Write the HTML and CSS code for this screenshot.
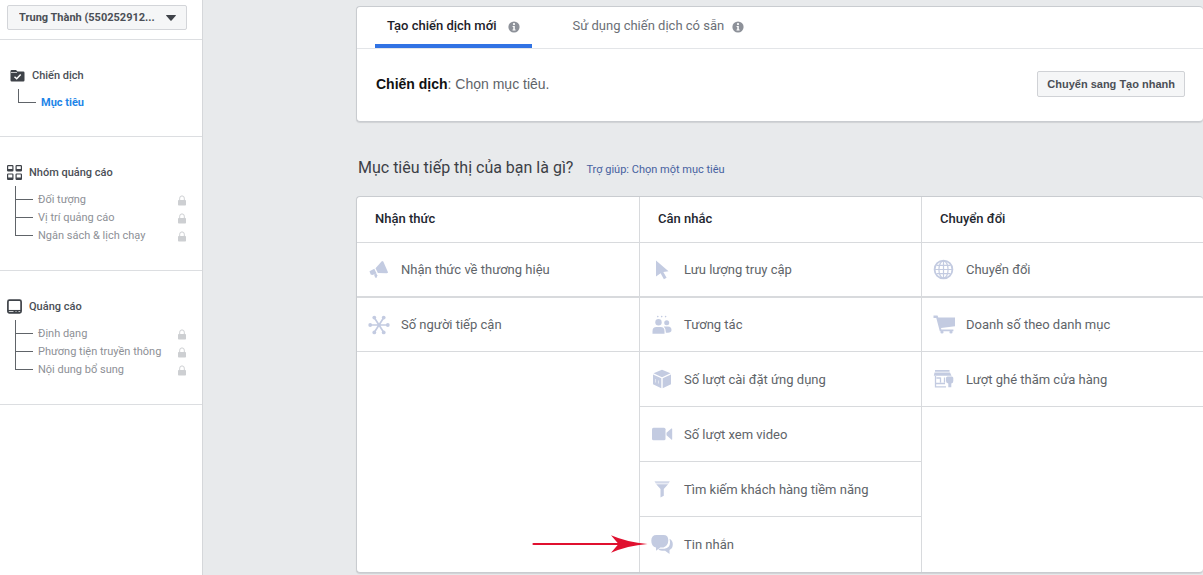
FILE: index.html
```html
<!DOCTYPE html>
<html lang="vi">
<head>
<meta charset="utf-8">
<meta name="viewport" content="width=device-width, initial-scale=1">
<title>Tạo chiến dịch mới</title>
<link rel="stylesheet" href="styles.css">
</head>
<body>
<svg class="defs" aria-hidden="true">
  <symbol id="lock" viewBox="0 0 8 11"><path d="M1.700 5V3.200a2.300 2.300 0 0 1 4.600 0V5" fill="none" stroke="currentColor" stroke-width="1"/><rect y="5" width="8" height="5.500" rx=".8" fill="currentColor"/></symbol>
  <symbol id="info" viewBox="0 0 12 12"><circle cx="6" cy="6" r="5.600" fill="#8d9199"/><circle cx="6" cy="3.100" r="1.100" fill="#fff"/><path d="M4.600 5h2.200v3.400h.8v1H4.500v-1h.8V6h-.7z" fill="#fff"/></symbol>
</svg>
<div class="app">
  <aside class="sidebar">
    <div class="account">
      <select class="account-select" aria-label="Tài khoản"><option>Trung Thành (550252912...</option></select>
      <svg class="account-caret" viewBox="0 0 10 6"><path d="M.5 0h9q.7 0 .2.7L5.600 5.500q-.6.6-1.200 0L.3.7Q-.2 0 .5 0z" fill="#3f4349"/></svg>
    </div>
    <nav aria-label="Các bước">
      <section class="step step-campaign">
        <h2 class="step-title"><svg class="step-icon" viewBox="0 0 15 15"><path d="M.5 3.200q0-1.200 1.200-1.200H6l1.500 1.500h5.800q1.200 0 1.200 1.200v7.600q0 1.200-1.200 1.200H1.700Q.5 13.500.5 12.300z" fill="#3f4349"/><path d="M1 4.500h6" stroke="#fff" stroke-width=".7"/><path d="M4.500 8.800l2.200 2 4-4.300" fill="none" stroke="#fff" stroke-width="1.500"/></svg>Chiến dịch</h2>
        <ul class="tree"><li class="tree-item"><a class="tree-link current" href="#muc-tieu">Mục tiêu</a></li></ul>
      </section>
      <section class="step">
        <h2 class="step-title"><svg class="step-icon" viewBox="0 0 15 15" fill="none" stroke="#3f4349" stroke-width="1.200"><rect x=".6" y=".6" width="5.300" height="5.300" rx=".6"/><rect x="9.100" y=".6" width="5.300" height="5.300" rx=".6"/><rect x=".6" y="9" width="5.300" height="5.300" rx=".6"/><rect x="9.100" y="9" width="5.300" height="5.300" rx=".6"/><path d="M.6 5h5.300M9.100 5h5.300M.6 13.400h5.300M9.100 13.400h5.300" stroke-width="2"/></svg>Nhóm quảng cáo</h2>
        <ul class="tree">
          <li class="tree-item"><a class="tree-link" href="#doi-tuong">Đối tượng</a><svg class="lock"><use href="#lock"/></svg></li>
          <li class="tree-item"><a class="tree-link" href="#vi-tri">Vị trí quảng cáo</a><svg class="lock"><use href="#lock"/></svg></li>
          <li class="tree-item"><a class="tree-link" href="#ngan-sach">Ngân sách &amp; lịch chạy</a><svg class="lock"><use href="#lock"/></svg></li>
        </ul>
      </section>
      <section class="step">
        <h2 class="step-title"><svg class="step-icon" viewBox="0 0 15 15" fill="none" stroke="#3f4349"><rect x=".9" y="1.200" width="13.200" height="12.600" rx="1.500" stroke-width="1.700"/><path d="M1 11.600h13" stroke-width="1.300"/><path d="M6.500 12.800h6" stroke-width="1.500" stroke-dasharray="2 1"/></svg>Quảng cáo</h2>
        <ul class="tree">
          <li class="tree-item"><a class="tree-link" href="#dinh-dang">Định dạng</a><svg class="lock"><use href="#lock"/></svg></li>
          <li class="tree-item"><a class="tree-link" href="#phuong-tien">Phương tiện truyền thông</a><svg class="lock"><use href="#lock"/></svg></li>
          <li class="tree-item"><a class="tree-link" href="#noi-dung">Nội dung bổ sung</a><svg class="lock"><use href="#lock"/></svg></li>
        </ul>
      </section>
    </nav>
  </aside>
  <main class="main">
    <section class="card">
      <div class="tabs" role="tablist">
        <button class="tab active" role="tab" aria-selected="true">Tạo chiến dịch mới<svg class="info"><use href="#info"/></svg></button>
        <button class="tab" role="tab" aria-selected="false">Sử dụng chiến dịch có sẵn<svg class="info"><use href="#info"/></svg></button>
      </div>
      <div class="summary">
        <p class="summary-text"><strong>Chiến dịch</strong>: Chọn mục tiêu.</p>
        <button class="quick">Chuyển sang Tạo nhanh</button>
      </div>
    </section>
    <header class="question">
      <h1 class="question-title">Mục tiêu tiếp thị của bạn là gì?</h1>
      <a class="help" href="#tro-giup">Trợ giúp: Chọn một mục tiêu</a>
    </header>
    <section class="card objectives">
      <div class="column">
        <h3 class="column-title">Nhận thức</h3>
        <button class="objective"><svg class="icon" viewBox="0 0 22 22"><path d="M14 2l1.300.4 4.800 11.100-1.200.8-9-.3-2.400-4.800z"/><path d="M1.500 12.200l4.800-2.500 2.300 4.700-4.300 1.700-1.600-.6z"/><path d="M6 15.600l2.400-.8 1 1.800-1 2.400-1.300-.5z"/></svg>Nhận thức về thương hiệu</button>
        <button class="objective"><svg class="icon" viewBox="0 0 22 22"><path d="M3 11h16M6.500 4l9 14M15.500 4l-9 14" stroke="currentColor" stroke-width="1.700"/><circle cx="2.200" cy="11" r="1.900"/><circle cx="19.800" cy="11" r="1.900"/><circle cx="6.300" cy="3.600" r="1.900"/><circle cx="15.700" cy="3.600" r="1.900"/><circle cx="6.300" cy="18.400" r="1.900"/><circle cx="15.700" cy="18.400" r="1.900"/></svg>Số người tiếp cận</button>
      </div>
      <div class="column">
        <h3 class="column-title">Cân nhắc</h3>
        <button class="objective"><svg class="icon" viewBox="0 0 22 22"><path d="M5 1.500l12.500 10.800-5.200.6 3.300 5.900-2.700 1.500-3.300-6L5 17.500z"/></svg>Lưu lượng truy cập</button>
        <button class="objective"><svg class="icon" viewBox="0 0 22 22"><circle cx="7.500" cy="8.300" r="3.200"/><circle cx="15.700" cy="8.800" r="2.500"/><path d="M1.500 19.800v-2.600q0-4.200 4-4.200h4q4 0 4 4.200v2.600zM12.800 12.400h4.200q3.500 0 3.500 3.500 0 2.600-3.700 2.800h-1.900q.2-4-2.100-6.300z"/><circle cx="6.800" cy="2.600" r=".8"/><circle cx="10.700" cy="2.600" r=".8"/><circle cx="14.600" cy="2.600" r=".8"/></svg>Tương tác</button>
        <button class="objective"><svg class="icon" viewBox="0 0 22 22"><path d="M11 1.800l8.500 3.500-8.500 3.900-8.500-3.900z"/><path d="M2 6.500l8.300 3.800v10L2 16.300zM20 6.500l-8.300 3.800v10l8.300-4z"/><path d="M4.500 11v3.500M7.500 12.500v3" stroke="#fff" stroke-width=".5"/></svg>Số lượt cài đặt ứng dụng</button>
        <button class="objective"><svg class="icon" viewBox="0 0 22 22"><rect x="1" y="4.800" width="13.500" height="12.500" rx="1.500"/><path d="M15.500 9.800l4.800-4.200q.9-.6.900.4v10q0 1-.9.400l-4.800-4.200z"/></svg>Số lượt xem video</button>
        <button class="objective"><svg class="icon" viewBox="0 0 22 22"><path d="M3.500 3.200h15.300l-1.300 2.200H4.800z" opacity=".75"/><path d="M5.200 6.200h11.900L12.800 11v6.800L9.500 19.500V11z"/></svg>Tìm kiếm khách hàng tiềm năng</button>
        <button class="objective"><svg class="icon" viewBox="0 0 22 22"><path d="M5.500 1h7q4.800 0 4.800 5.200t-4.800 7.300H9.300L5 16.800v-3.300Q.3 12.500.3 6.800.3 1 5.500 1z"/><path d="M18.500 4.800q3.300 1.600 3.300 5.700 0 4-3.300 5.500v4l-4.400-3.200H11q-2.700 0-4-2h6.500q5.500-.8 5.500-6.300 0-1.700-.5-3.700z"/></svg>Tin nhắn
          <svg class="pointer" viewBox="0 0 116 20" aria-hidden="true"><path d="M1.500 10H90" stroke="#e0102f" stroke-width="2.200" stroke-linecap="round"/><path d="M79 1.200Q95 8.200 115.500 10 95 11.800 79 18.800L86.500 10z" fill="#e0102f"/></svg>
        </button>
      </div>
      <div class="column">
        <h3 class="column-title">Chuyển đổi</h3>
        <button class="objective"><svg class="icon" viewBox="0 0 22 22"><g fill="none" stroke="currentColor" stroke-width="1.200"><circle cx="10.500" cy="10.500" r="8.900" stroke-width="1.800"/><ellipse cx="10.500" cy="10.500" rx="4.600" ry="8.700"/><path d="M10.500 2v17M2 10.500h17M3.500 6.300h14M3.500 14.700h14"/></g></svg>Chuyển đổi</button>
        <button class="objective"><svg class="icon" viewBox="0 0 22 22"><path d="M.5 1.500h4l.8 2H22v8.800L8 14l.4 1.500h12v1.700H6.800L3.300 4H.5z"/><circle cx="9" cy="18" r="1.600"/><circle cx="18" cy="18" r="1.600"/></svg>Doanh số theo danh mục</button>
        <button class="objective"><svg class="icon" viewBox="0 0 22 22"><path d="M2 2h14.500v1.800H2zM1.500 4.600H17l1.500 3.200H.8z"/><path d="M2.500 8v10.800H13M2.500 15.500H12M7.500 9.500v5M3.500 10h4M11.500 9.500v5" fill="none" stroke="currentColor" stroke-width="1.300"/><path d="M13 10q0-1.500 1.500-1.500h4.300q1.500 0 1.500 1.500v3q0 2-2 2.500v3.800h-3v-3.800q-2.300-.5-2.300-2.500z"/></svg>Lượt ghé thăm cửa hàng</button>
      </div>
    </section>
  </main>
</div>
</body>
</html>
```
FILE: styles.css
```css
* { box-sizing: border-box; }
body { margin: 0; background: #e8eaec; font-family: Roboto, "Liberation Sans", sans-serif; color: #4b4f56; }
h1, h2, h3, p, ul { margin: 0; padding: 0; }
button, select { font: inherit; color: inherit; }
button { cursor: pointer; }
a { text-decoration: none; }
.defs { display: none; }
.app { display: flex; min-height: 100vh; }

.sidebar { flex: 0 0 203px; background: #fff; border-right: 1px solid #d5d7da; }
.account { position: relative; height: 40px; padding: 5px 15px 0 7px; border-bottom: 1px solid #dcdee1; }
.account-select { display: block; width: 100%; height: 25px; padding: 0 24px 0 11px; border: 1px solid #d3d5d9; border-radius: 2px; background: #f5f6f7; appearance: none; font-size: 11px; font-weight: 700; }
.account-caret { position: absolute; top: 15px; right: 26px; width: 10px; height: 6px; pointer-events: none; }

.step { padding: 25px 16px 26px 7px; border-bottom: 1px solid #dcdee1; }
.step-campaign { padding-bottom: 25px; padding-left: 10px; }
.step-title { display: flex; align-items: center; gap: 7px; height: 20px; font-size: 11px; font-weight: 500; }
.step-icon { width: 15px; height: 15px; }
.tree { position: relative; margin: 8px 0 0 8px; list-style: none; }
.tree::before { content: ""; position: absolute; left: 0; top: -4px; bottom: 8px; border-left: 1px solid #606469; }
.tree-item { display: flex; align-items: center; height: 18px; font-size: 11px; }
.tree-item::before { content: ""; flex: none; width: 18px; margin-right: 5px; border-top: 1px solid #606469; }
.tree-link { flex: 1; color: #8d9096; white-space: nowrap; }
.tree-link.current { color: #1d85e8; font-weight: 700; }
.lock { width: 8px; height: 11px; margin-top: 3px; color: #cdcfd2; }

.main { flex: 1; min-width: 0; padding: 6px 0 2px 153px; }
.card { background: #fff; border: solid #c9ccd0; border-width: 1px 0 1px 1px; border-radius: 4px; box-shadow: 0 1px 1px #d0d2d5; }
.tabs { display: flex; gap: 28px; height: 42px; padding-left: 18px; border-bottom: 1px solid #e3e5e8; }
.tab { display: flex; align-items: center; gap: 8px; padding: 0 12px; border: 0; border-bottom: 4px solid transparent; background: none; font-size: 13px; color: #6b6f76; }
.tab.active { gap: 12px; border-bottom-color: #3173e4; font-weight: 500; color: #1d2129; }
.info { width: 12px; height: 12px; margin-top: 2px; }
.summary { display: flex; align-items: center; justify-content: space-between; height: 70px; padding: 0 18px 0 19px; margin-bottom: 2px; }
.summary-text { font-family: "Liberation Sans", sans-serif; font-size: 14px; color: #606469; }
.summary-text strong { color: #111; }
.quick { height: 26px; padding: 0 9px; border: 1px solid #d0d2d6; border-radius: 2px; background: #f5f6f7; font-family: "Liberation Sans", sans-serif; font-size: 11px; font-weight: 700; }

.question { display: flex; align-items: baseline; gap: 13px; height: 74px; padding: 34px 0 0 2px; }
.question-title { font-size: 16px; line-height: 24px; font-weight: 400; color: #3c4046; }
.help { font-size: 11px; color: #4661a0; }

.objectives { display: grid; grid-template-columns: repeat(3, 1fr); }
.column + .column { border-left: 1px solid #d8dadd; }
.column-title { height: 46px; padding-left: 18px; border-bottom: 1px solid #d8dadd; font-size: 13px; line-height: 43px; font-weight: 500; color: #23272f; }
.objective { position: relative; display: flex; align-items: center; gap: 11px; width: 100%; height: 55px; padding: 0 11px; border: solid #d8dadd; border-width: 0 0 1px; background: none; font-size: 13px; color: #606469; text-align: left; }
.column-title + .objective { height: 54px; }
.column-title + .objective + .objective { border-top-width: 1px; }
.objective:nth-child(7) { border-bottom: 0; }
.icon { flex: none; width: 22px; height: 22px; fill: currentColor; color: #c3cbe1; }
.pointer { position: absolute; left: -108px; top: 17px; width: 116px; height: 20px; }
```
